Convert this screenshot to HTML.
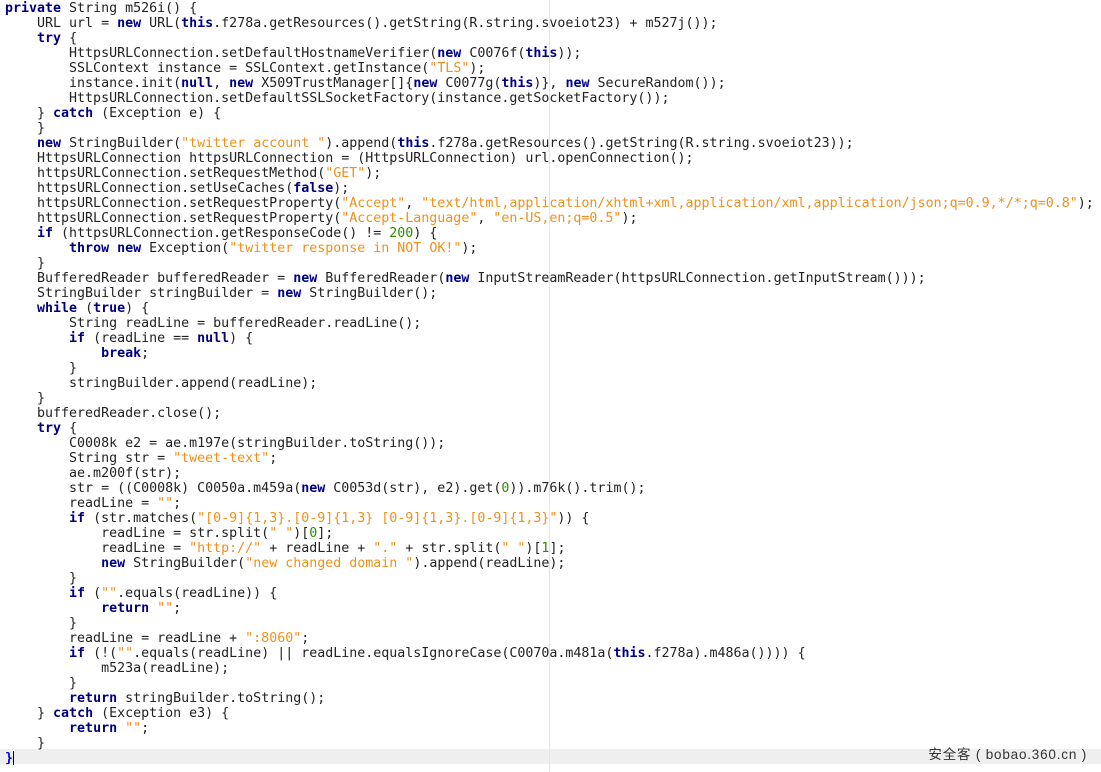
<!DOCTYPE html>
<html><head><meta charset="utf-8"><style>
html,body{margin:0;padding:0;background:#fff;width:1101px;height:772px;overflow:hidden;position:relative}
pre{margin:0;position:absolute;left:5px;top:1px;font-family:"DejaVu Sans Mono","Liberation Mono",monospace;font-size:13.3px;line-height:15px;color:#222}
.k{color:#00007f;font-weight:bold}
.s{color:#f0901a}
.n{color:#2e8b00}
.hl{position:absolute;left:0;top:749px;width:1101px;height:15px;background:#efefef}
.vl{position:absolute;left:549px;top:0;width:1px;height:772px;background:#e4e4e4}
.wm{position:absolute;right:14px;top:747px;font-family:"Liberation Sans","Noto Sans CJK SC",sans-serif;font-size:13.5px;letter-spacing:0.8px;color:#333;line-height:15px;white-space:pre}
.cur{display:inline-block;width:1px;height:14px;background:#000;vertical-align:-3px}
</style></head><body>
<div class="hl"></div><div class="vl"></div>
<pre><span class="k">private</span> String m526i() {
    URL url = <span class="k">new</span> URL(<span class="k">this</span>.f278a.getResources().getString(R.string.svoeiot23) + m527j());
    <span class="k">try</span> {
        HttpsURLConnection.setDefaultHostnameVerifier(<span class="k">new</span> C0076f(<span class="k">this</span>));
        SSLContext instance = SSLContext.getInstance(<span class="s">"TLS"</span>);
        instance.init(<span class="k">null</span>, <span class="k">new</span> X509TrustManager[]{<span class="k">new</span> C0077g(<span class="k">this</span>)}, <span class="k">new</span> SecureRandom());
        HttpsURLConnection.setDefaultSSLSocketFactory(instance.getSocketFactory());
    } <span class="k">catch</span> (Exception e) {
    }
    <span class="k">new</span> StringBuilder(<span class="s">"twitter account "</span>).append(<span class="k">this</span>.f278a.getResources().getString(R.string.svoeiot23));
    HttpsURLConnection httpsURLConnection = (HttpsURLConnection) url.openConnection();
    httpsURLConnection.setRequestMethod(<span class="s">"GET"</span>);
    httpsURLConnection.setUseCaches(<span class="k">false</span>);
    httpsURLConnection.setRequestProperty(<span class="s">"Accept"</span>, <span class="s">"text/html,application/xhtml+xml,application/xml,application/json;q=0.9,*/*;q=0.8"</span>);
    httpsURLConnection.setRequestProperty(<span class="s">"Accept-Language"</span>, <span class="s">"en-US,en;q=0.5"</span>);
    <span class="k">if</span> (httpsURLConnection.getResponseCode() != <span class="n">200</span>) {
        <span class="k">throw</span> <span class="k">new</span> Exception(<span class="s">"twitter response in NOT OK!"</span>);
    }
    BufferedReader bufferedReader = <span class="k">new</span> BufferedReader(<span class="k">new</span> InputStreamReader(httpsURLConnection.getInputStream()));
    StringBuilder stringBuilder = <span class="k">new</span> StringBuilder();
    <span class="k">while</span> (<span class="k">true</span>) {
        String readLine = bufferedReader.readLine();
        <span class="k">if</span> (readLine == <span class="k">null</span>) {
            <span class="k">break</span>;
        }
        stringBuilder.append(readLine);
    }
    bufferedReader.close();
    <span class="k">try</span> {
        C0008k e2 = ae.m197e(stringBuilder.toString());
        String str = <span class="s">"tweet-text"</span>;
        ae.m200f(str);
        str = ((C0008k) C0050a.m459a(<span class="k">new</span> C0053d(str), e2).get(<span class="n">0</span>)).m76k().trim();
        readLine = <span class="s">""</span>;
        <span class="k">if</span> (str.matches(<span class="s">"[0-9]{1,3}.[0-9]{1,3} [0-9]{1,3}.[0-9]{1,3}"</span>)) {
            readLine = str.split(<span class="s">" "</span>)[<span class="n">0</span>];
            readLine = <span class="s">"http://"</span> + readLine + <span class="s">"."</span> + str.split(<span class="s">" "</span>)[<span class="n">1</span>];
            <span class="k">new</span> StringBuilder(<span class="s">"new changed domain "</span>).append(readLine);
        }
        <span class="k">if</span> (<span class="s">""</span>.equals(readLine)) {
            <span class="k">return</span> <span class="s">""</span>;
        }
        readLine = readLine + <span class="s">":8060"</span>;
        <span class="k">if</span> (!(<span class="s">""</span>.equals(readLine) || readLine.equalsIgnoreCase(C0070a.m481a(<span class="k">this</span>.f278a).m486a()))) {
            m523a(readLine);
        }
        <span class="k">return</span> stringBuilder.toString();
    } <span class="k">catch</span> (Exception e3) {
        <span class="k">return</span> <span class="s">""</span>;
    }
<span style="color:#00f;font-weight:bold">}</span><span class="cur"></span></pre>
<div class="wm">安全客 ( bobao.360.cn )</div>
</body></html>
